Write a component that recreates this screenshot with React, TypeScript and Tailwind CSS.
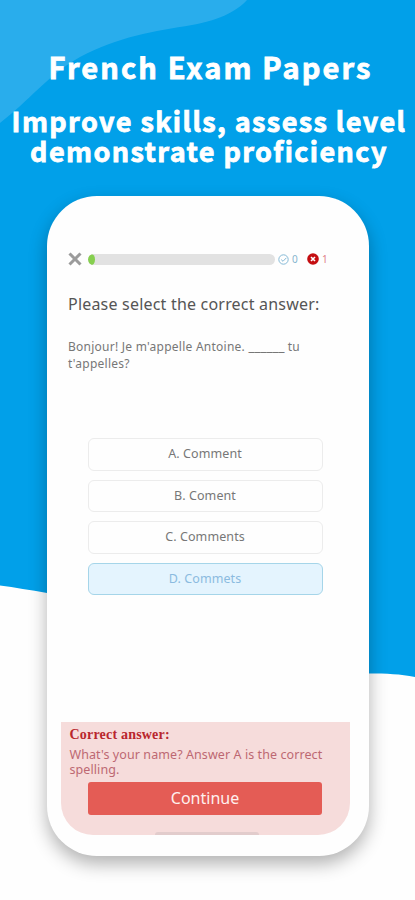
import { useState } from 'react';

const options = [
  { id: 'A', label: 'Comment' },
  { id: 'B', label: 'Coment' },
  { id: 'C', label: 'Comments' },
  { id: 'D', label: 'Commets' },
];

function Backdrop() {
  return (
    <svg width="415" height="900" viewBox="0 0 415 900" className="absolute inset-0">
      <path
        fill="#01a0e9"
        d="M0 0H415V677C400 674 387 673.5 369 673.5C270 668 150 620 47 593C30 590 15 587.5 0 585.5Z"
      />
      <path
        fill="#29adec"
        d="M0 0H247C239 9 222 20 192 25C155 31 117 37 80 57C48 75 29 101 0 123Z"
      />
    </svg>
  );
}

function ScoreBar() {
  return (
    <div className="flex h-3 items-center">
      <svg width="14" height="14" viewBox="0 0 14 14" stroke="#9b9b9b" strokeWidth="3">
        <path d="M1.5 1.5L12.5 12.5M12.5 1.5L1.5 12.5" />
      </svg>
      <div className="ml-[6px] h-[11px] w-[187px] overflow-hidden rounded-full bg-[#e2e2e2]">
        <div className="h-full w-[7px] rounded-[50%] bg-[#86cf4f]" />
      </div>
      <svg className="ml-[3px]" width="11" height="11" viewBox="0 0 11 11" fill="none" stroke="#85b9d6">
        <circle cx="5.5" cy="5.5" r="4.7" />
        <path d="M3.2 5.6L5 7.3L8.4 3.8" />
      </svg>
      <span className="ml-[3px] w-[7px] text-[10px] leading-3 text-[#85b5cf]">0</span>
      <svg className="ml-[8px]" width="12" height="12" viewBox="0 0 12 12">
        <circle cx="6" cy="6" r="5.8" fill="#c40d10" />
        <path d="M4 4L8 8M8 4L4 8" stroke="#fff" strokeWidth="1.6" />
      </svg>
      <span className="ml-[3px] text-[10px] leading-3 text-[#e08088]">1</span>
    </div>
  );
}

export default function App() {
  const [selected, setSelected] = useState('D');

  return (
    <div className="relative h-[900px] w-[415px] overflow-hidden bg-[#fefefe] font-['Noto_Sans',sans-serif]">
      <Backdrop />
      <div className="relative flex flex-col items-center">
        <header className="flex h-[196px] flex-col items-center whitespace-nowrap pt-[44px] text-center font-['Noto_Sans_CJK_SC',sans-serif] font-bold text-white [-webkit-text-stroke:0.8px_#fff]">
          <h1 className="pl-[6px] text-[29px] leading-[44px] tracking-[2.1px]">French Exam Papers</h1>
          <p className="mt-[18px] pl-[3px] text-[27px] leading-[30px] tracking-[1.4px]">
            Improve skills, assess level
            <br />
            demonstrate proficiency
          </p>
        </header>
        <main className="flex h-[660px] w-[322px] flex-col rounded-[50px] bg-[#fefefe] pt-[57px] pr-[19px] pb-[21px] pl-[14px] shadow-[0_8px_18px_rgba(0,0,0,0.3)]">
          <div className="pr-[7px] pl-[7.5px]">
            <ScoreBar />
            <h2 className="mt-[27px] whitespace-nowrap text-[16px] leading-6 tracking-[0.2px] text-[#555]">
              Please select the correct answer:
            </h2>
            <p className="mt-[22px] h-[97px] whitespace-nowrap text-[12px] leading-[17px] tracking-[0.25px] text-[#777]">
              Bonjour! Je m'appelle Antoine. <span className="text-[13.5px] leading-none tracking-[0px]">______</span> tu
              <br />
              t'appelles?
            </p>
          </div>
          <div className="mt-[3px] flex flex-col gap-[9px] px-[27px]">
            {options.map((option) => (
              <button
                key={option.id}
                onClick={() => setSelected(option.id)}
                className={`h-[32.5px] rounded-[6px] border pt-px text-[12.5px] tracking-[0.1px] ${
                  selected === option.id
                    ? 'border-[#a5d5e9] bg-[#e4f4fe] text-[#8bbbe0]'
                    : 'border-[#ececec] bg-[#fefefe] text-[#777]'
                }`}
              >
                {option.id}. {option.label}
              </button>
            ))}
          </div>
          <section className="mt-auto flex h-[113px] flex-col items-center overflow-hidden rounded-b-[32px] bg-[#f6dcdb]">
            <div className="w-full pl-[9px]">
              <h3 className="pt-[4px] font-['Liberation_Serif',serif] text-[14px] font-bold leading-[18px] tracking-[0.2px] text-[#b9262d]">
                Correct answer:
              </h3>
              <p className="mt-[3px] whitespace-nowrap text-[12.5px] leading-[15px] tracking-[0.08px] text-[#bd6872]">
                What's your name? Answer A is the correct
                <br />
                spelling.
              </p>
            </div>
            <button className="mt-[5px] h-[33px] w-[234px] rounded-[3px] bg-[#e45c55] text-[16px] leading-[33px] text-[#fff0ee]">
              Continue
            </button>
            <div className="mt-auto ml-[3px] h-[3px] w-[104px] rounded-t-full bg-[#e2cccc]" />
          </section>
        </main>
      </div>
    </div>
  );
}
